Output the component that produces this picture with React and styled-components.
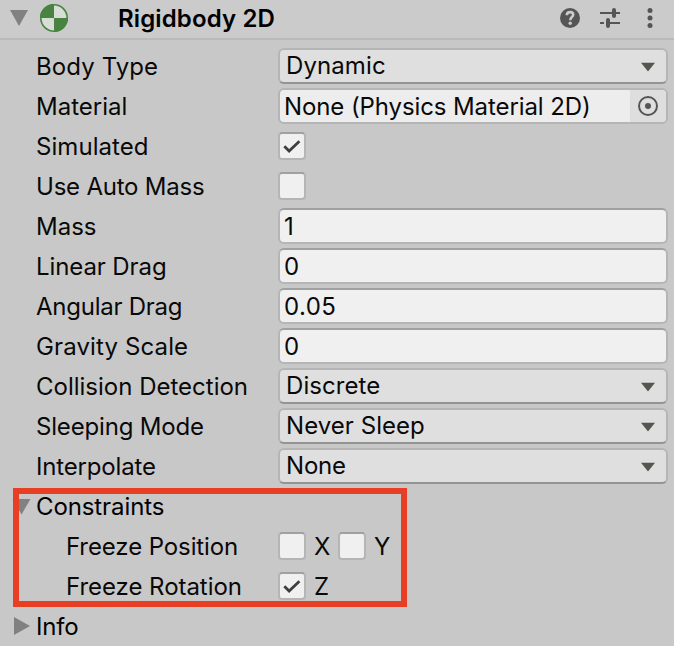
import React from "react";
import styled, { createGlobalStyle } from "styled-components";

const GlobalStyle = createGlobalStyle`
  * { box-sizing: border-box; }
  body { margin: 0; background: #c8c8c8; }
`;

const Inspector = styled.main`
  position: relative;
  width: 674px;
  height: 646px;
  overflow: hidden;
  background: #c8c8c8;
  color: #090909;
  font: 370 24px/40px Inter, sans-serif;
  white-space: nowrap;
`;

const Header = styled.header`
  display: flex;
  align-items: center;
  height: 40px;
  padding: 0 14px 4px 10px;
  background: #cbcbcb;
  border-bottom: 2px solid #bababa;
`;

const HeaderFoldout = styled.svg`
  width: 18px;
  height: 16px;
  margin: 2px 12px 0 0;
  fill: #818181;
`;

const BodyIcon = styled.svg`
  width: 28px;
  height: 28px;
  margin-top: 2px;
`;

const Title = styled.h1`
  flex: 1;
  margin: 3px 0 0 50px;
  color: #000;
  font-size: 24px;
  font-weight: 600;
  line-height: 36px;
  letter-spacing: 0.13px;
`;

const Actions = styled.div`
  display: flex;
  gap: 20px;
  margin-top: 2px;
`;

const ActionIcon = styled.svg`
  width: 20px;
  height: 20px;
  color: #555;
`;

const Properties = styled.section`
  display: flex;
  flex-direction: column;
  padding: 6px 6px 0 0;
`;

const Row = styled.div`
  display: flex;
  align-items: center;
  height: 40px;
`;

const Label = styled.div`
  width: 278px;
  padding: 1px 0 0 ${(p) => (p.$nested ? 66 : 36)}px;
  letter-spacing: ${(p) => p.$spacing ?? 0}px;
`;

const Foldout = styled.div`
  display: flex;
  align-items: center;
  width: 36px;
  padding-left: 12px;
`;

const FoldoutLabel = styled.span`
  padding-top: 1px;
  color: #000;
  letter-spacing: ${(p) => p.$spacing ?? 0}px;
`;

const FoldoutIcon = styled.svg`
  width: 20px;
  height: 20px;
  fill: #818181;
`;

const Field = styled.div`
  flex: 1;
  display: flex;
  align-items: center;
  height: 36px;
  overflow: hidden;
  border: 2px solid #b5b5b5;
  border-radius: 6px;
  letter-spacing: ${(p) => p.$spacing ?? 0}px;
`;

const NumberField = styled(Field)`
  padding: 1px 0 0 4px;
  background: #f0f0f0;
  border-top-color: #a0a0a0;
`;

const Dropdown = styled(Field)`
  justify-content: space-between;
  padding: 0 10px 1px 6px;
  background: #dfdfdf;
  border-bottom-color: #939393;
`;

const ObjectField = styled(Field)`
  background: #ededed;
`;

const ObjectName = styled.span`
  flex: 1;
  padding: 2px 0 0 4px;
`;

const Picker = styled.div`
  display: grid;
  place-items: center;
  width: 36px;
  height: 32px;
  background: #dedede;
`;

const Arrow = styled.svg`
  width: 16px;
  height: 10px;
  margin-top: 2px;
  fill: #555550;
`;

const Checkbox = styled.div`
  display: grid;
  place-items: center;
  width: 28px;
  height: 28px;
  background: #f0f0f0;
  border: 2px solid #b5b5b5;
  border-top-color: #a0a0a0;
  border-radius: 4px;
`;

const Axis = styled.div`
  display: flex;
  align-items: center;
  width: 60px;
  gap: 8px;
`;

const AxisName = styled.span`
  padding-top: 1px;
`;

const Highlight = styled.div`
  position: absolute;
  left: 13px;
  top: 488px;
  width: 394px;
  height: 119px;
  border: 6px solid #e83f24;
`;

function Check({ on }) {
  return (
    <Checkbox>
      {on && (
        <svg width="24" height="24" viewBox="0 0 24 24">
          <path d="M4.3 12.2L9.1 17L19.4 7.2" fill="none" stroke="#3e3e3e" strokeWidth="2.7" />
        </svg>
      )}
    </Checkbox>
  );
}

function Select({ value, spacing }) {
  return (
    <Dropdown $spacing={spacing}>
      {value}
      <Arrow viewBox="0 0 16 10"><path d="M1 .7H15L8 9.5Z" /></Arrow>
    </Dropdown>
  );
}

function Property({ label, nested, spacing, children }) {
  return (
    <Row>
      <Label $nested={nested} $spacing={spacing}>{label}</Label>
      {children}
    </Row>
  );
}

export default function App() {
  return (
    <Inspector>
      <GlobalStyle />
      <Header>
        <HeaderFoldout viewBox="0 0 18 16"><path d="M0 0H18L9 16Z" /></HeaderFoldout>
        <BodyIcon viewBox="0 0 28 28">
          <circle cx="14" cy="14" r="13.2" fill="#d9ddd8" stroke="#488341" strokeWidth="1.6" />
          <path d="M14 14V0A14 14 0 0 0 0 14ZM14 14V28A14 14 0 0 0 28 14Z" fill="#488341" />
        </BodyIcon>
        <Title>Rigidbody 2D</Title>
        <Actions>
          <ActionIcon viewBox="0 0 20 20">
            <circle cx="10" cy="10" r="10" fill="currentColor" />
            <path d="M6.8 7.2C6.9 5 8.2 4.1 10.1 4.1C12 4.1 13.2 5.2 13.2 6.8C13.2 9.1 10.3 9.1 10.3 12.2" fill="none" stroke="#cbcbcb" strokeWidth="2.6" />
            <circle cx="10.2" cy="15.3" r="1.7" fill="#cbcbcb" />
          </ActionIcon>
          <ActionIcon viewBox="0 0 20 20">
            <path d="M0 5H12M16 5H20M0 15H4M10 15H20" stroke="currentColor" strokeWidth="2" />
            <path d="M14 2V8M8 12V18" stroke="currentColor" strokeWidth="4" strokeLinecap="round" />
          </ActionIcon>
          <ActionIcon viewBox="0 0 20 20">
            <g fill="currentColor">
              <circle cx="10" cy="2.5" r="2.5" />
              <circle cx="10" cy="10" r="2.5" />
              <circle cx="10" cy="17.5" r="2.5" />
            </g>
          </ActionIcon>
        </Actions>
      </Header>
      <Properties>
        <Property label="Body Type" spacing={0.1}><Select value="Dynamic" spacing={0.1} /></Property>
        <Property label="Material" spacing={0.02}>
          <ObjectField $spacing={-0.1}>
            <ObjectName>None (Physics Material 2D)</ObjectName>
            <Picker>
              <svg width="20" height="20" viewBox="0 0 20 20">
                <circle cx="10" cy="10" r="9" fill="none" stroke="#555" strokeWidth="2" />
                <circle cx="10" cy="10" r="3" fill="#555" />
              </svg>
            </Picker>
          </ObjectField>
        </Property>
        <Property label="Simulated" spacing={0.05}><Check on /></Property>
        <Property label="Use Auto Mass" spacing={-0.22}><Check /></Property>
        <Property label="Mass"><NumberField>1</NumberField></Property>
        <Property label="Linear Drag" spacing={-0.1}><NumberField>0</NumberField></Property>
        <Property label="Angular Drag" spacing={-0.25}><NumberField $spacing={0.4}>0.05</NumberField></Property>
        <Property label="Gravity Scale" spacing={0.13}><NumberField>0</NumberField></Property>
        <Property label="Collision Detection"><Select value="Discrete" spacing={0.08} /></Property>
        <Property label="Sleeping Mode" spacing={-0.17}><Select value="Never Sleep" spacing={0.05} /></Property>
        <Property label="Interpolate" spacing={-0.17}><Select value="None" spacing={-0.2} /></Property>
        <Row>
          <Foldout><FoldoutIcon viewBox="0 0 20 20"><path d="M.5 3H18.5L9.5 18.5Z" /></FoldoutIcon></Foldout>
          <FoldoutLabel $spacing={-0.1}>Constraints</FoldoutLabel>
        </Row>
        <Property label="Freeze Position" spacing={-0.1} nested>
          <Axis><Check /><AxisName>X</AxisName></Axis>
          <Axis><Check /><AxisName>Y</AxisName></Axis>
        </Property>
        <Property label="Freeze Rotation" spacing={-0.04} nested>
          <Axis><Check on /><AxisName>Z</AxisName></Axis>
        </Property>
        <Row>
          <Foldout><FoldoutIcon viewBox="0 0 20 20"><path d="M2 1V19L18 10Z" /></FoldoutIcon></Foldout>
          <FoldoutLabel $spacing={-0.2}>Info</FoldoutLabel>
        </Row>
      </Properties>
      <Highlight />
    </Inspector>
  );
}
